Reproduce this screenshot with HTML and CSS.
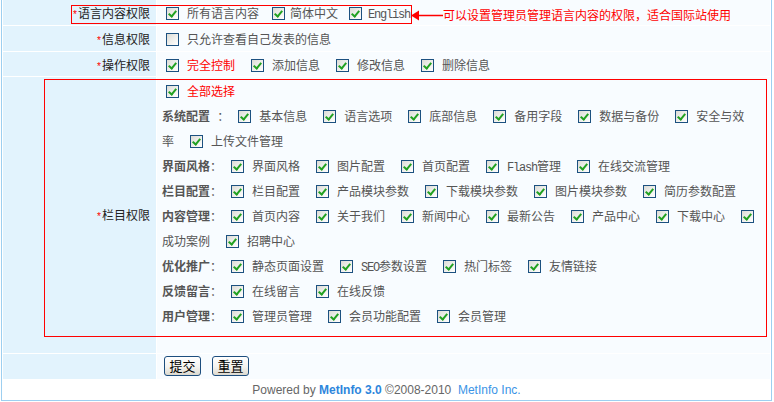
FILE: index.html
```html
<!DOCTYPE html>
<html lang="zh-CN">
<head>
<meta charset="utf-8">
<title>管理员权限设置</title>
<link rel="stylesheet" href="styles.css">
</head>
<body>
<div class="wrap">
  <div class="form">
    <div class="lab"><span class="req">*</span>语言内容权限</div>
    <div class="val lang"><span class="cb on first"></span><span class="t">所有语言内容</span><span class="cb on"></span><span class="t">简体中文</span><span class="cb on"></span><span class="t en">English</span></div>

    <div class="lab"><span class="req">*</span>信息权限</div>
    <div class="val row2"><span class="cb first"></span> <span class="t">只允许查看自己发表的信息</span></div>

    <div class="lab"><span class="req">*</span>操作权限</div>
    <div class="val">
      <span class="cb on first"></span> <span class="t red">完全控制</span>
      <span class="cb on"></span> <span class="t">添加信息</span>
      <span class="cb on"></span> <span class="t">修改信息</span>
      <span class="cb on"></span> <span class="t">删除信息</span>
    </div>

    <div class="lab mid"><span class="req">*</span>栏目权限</div>
    <div class="val big">
      <div class="ln"><span class="cb on first"></span> <span class="t red">全部选择</span></div>
      <div class="ln">
        <b class="k">系统配置</b> <span class="colon">：</span>
        <span class="cb on lead"></span> <span class="t">基本信息</span>
        <span class="cb on"></span> <span class="t">语言选项</span>
        <span class="cb on"></span> <span class="t">底部信息</span>
        <span class="cb on"></span> <span class="t">备用字段</span>
        <span class="cb on"></span> <span class="t">数据与备份</span>
        <span class="cb on"></span> <span class="t">安全与效率</span>
        <span class="cb on"></span> <span class="t">上传文件管理</span>
      </div>
      <div class="ln">
        <b class="k">界面风格</b><span class="colon">：</span>
        <span class="cb on lead"></span> <span class="t">界面风格</span>
        <span class="cb on"></span> <span class="t">图片配置</span>
        <span class="cb on"></span> <span class="t">首页配置</span>
        <span class="cb on"></span> <span class="t"><span class="en">Flash</span>管理</span>
        <span class="cb on"></span> <span class="t">在线交流管理</span>
      </div>
      <div class="ln">
        <b class="k">栏目配置</b><span class="colon">：</span>
        <span class="cb on lead"></span> <span class="t">栏目配置</span>
        <span class="cb on"></span> <span class="t">产品模块参数</span>
        <span class="cb on"></span> <span class="t">下载模块参数</span>
        <span class="cb on"></span> <span class="t">图片模块参数</span>
        <span class="cb on"></span> <span class="t">简历参数配置</span>
      </div>
      <div class="ln">
        <b class="k">内容管理</b><span class="colon">：</span>
        <span class="cb on lead"></span> <span class="t">首页内容</span>
        <span class="cb on"></span> <span class="t">关于我们</span>
        <span class="cb on"></span> <span class="t">新闻中心</span>
        <span class="cb on"></span> <span class="t">最新公告</span>
        <span class="cb on"></span> <span class="t">产品中心</span>
        <span class="cb on"></span> <span class="t">下载中心</span>
        <span class="cb on"></span> <span class="t">成功案例</span>
        <span class="cb on"></span> <span class="t">招聘中心</span>
      </div>
      <div class="ln">
        <b class="k">优化推广</b><span class="colon">：</span>
        <span class="cb on lead"></span> <span class="t">静态页面设置</span>
        <span class="cb on"></span> <span class="t"><span class="en">SEO</span>参数设置</span>
        <span class="cb on"></span> <span class="t">热门标签</span>
        <span class="cb on"></span> <span class="t">友情链接</span>
      </div>
      <div class="ln">
        <b class="k">反馈留言</b><span class="colon">：</span>
        <span class="cb on lead"></span> <span class="t">在线留言</span>
        <span class="cb on"></span> <span class="t">在线反馈</span>
      </div>
      <div class="ln">
        <b class="k">用户管理</b><span class="colon">：</span>
        <span class="cb on lead"></span> <span class="t">管理员管理</span>
        <span class="cb on"></span> <span class="t">会员功能配置</span>
        <span class="cb on"></span> <span class="t">会员管理</span>
      </div>
    </div>

    <div class="lab"></div>
    <div class="val btns">
      <button class="btn" type="submit">提交</button>
      <button class="btn" type="reset">重置</button>
    </div>
  </div>
  <div class="foot">Powered by <b>MetInfo 3.0</b> ©2008-2010&nbsp; <a href="#">MetInfo Inc.</a></div>
</div>

<div class="mark mark1"></div>
<div class="mark mark2"></div>
<div class="tip">
  <svg class="arrow" width="32" height="14" viewBox="0 0 32 14"><polygon points="0,7.5 8,2.5 8,12.5" fill="#f00"/><line x1="7" y1="7.5" x2="32" y2="7.5" stroke="#f00" stroke-width="1.5"/></svg>
  <span class="tip-text">可以设置管理员管理语言内容的权限，适合国际站使用</span>
</div>
</body>
</html>
```
FILE: styles.css
```css
* { box-sizing: border-box; }
html, body { margin: 0; padding: 0; background: #fff; }
body {
  width: 774px; height: 402px; overflow: hidden; position: relative;
  font-family: "Liberation Mono", "Noto Sans CJK SC", monospace;
  font-size: 12px; line-height: 25px; color: #333;
}
.wrap {
  margin-left: 1px; width: 771px;
  border: 1px solid #9dcff0; border-top: 0;
  padding: 0 1px; background: #fff;
}
.form {
  display: grid;
  grid-template-columns: 153px 613px;
  grid-template-rows: 25px 25px 24px 276px 25px;
  gap: 1px;
}
.lab {
  background: #e2f3fd; text-align: right; padding: 3px 6px 0 0;
  color: #222; white-space: nowrap;
}
.lab.mid { display: flex; align-items: center; justify-content: flex-end; padding-top: 5px; }
.val { background: #f8fcff; padding: 3px 15px 0 5px; color: #555; }
.val.big { padding-top: 4px; }
.req { color: #f00; font-size: 10px; line-height: 1; }
.t, .k, .colon { line-height: 1; }
.en { font-size: 12px; letter-spacing: -1.2px; line-height: 1; }
.red { color: #f00; }
.k { font-weight: bold; color: #555; }

.cb {
  display: inline-block; width: 13px; height: 13px;
  border: 1px solid #1c5180;
  background: linear-gradient(135deg, #dcdcd6 0%, #f2f2ef 60%, #fff 100%);
  vertical-align: -2px; margin-right: 0.8px; position: relative;
}
.cb.on::after {
  content: ""; position: absolute; left: 3px; top: 1px;
  width: 3px; height: 6px;
  border: solid #21a121; border-width: 0 2px 2px 0;
  transform: rotate(40deg);
}
.cb.first { margin-left: 4px; }
.cb.lead { margin-left: 1.8px; }
.t { margin-right: 8.8px; }

.lang .cb.first { margin-right: 8px; }
.lang .t { margin-right: 13px; }
.lang .cb:nth-child(3) { margin-right: 5px; }
.lang .t:nth-child(4) { margin-right: 11px; }
.lang .cb:nth-child(5) { margin-right: 6px; }

.btns { display: flex; align-items: flex-start; padding: 2px 0 0 7px; }
.btn {
  width: 37px; height: 20px; margin: 0 11px 0 0; padding: 0;
  border: 1px solid #1d4e7e; border-radius: 3px;
  background: linear-gradient(#ffffff, #f4f3ef 55%, #dcd9cf);
  font: 13px/18px "Noto Sans CJK SC", sans-serif; color: #000;
}

.foot {
  height: 21px; line-height: 23px; text-align: center;
  font-family: "Liberation Sans", Arial, sans-serif; font-size: 12px; color: #666;
}
.foot b { color: #2e86dc; }
.foot a { color: #3b94e6; text-decoration: none; }

.mark { position: absolute; border: 1px solid #f00; pointer-events: none; }
.mark1 { left: 71px; top: 5px; width: 341px; height: 19px; }
.mark2 { left: 44px; top: 79px; width: 723px; height: 258px; }
.tip {
  position: absolute; left: 411px; top: 8px; height: 14px;
  display: flex; align-items: center; color: #f00;
  font-family: "Noto Sans CJK SC", sans-serif; font-size: 12px; line-height: 14px;
  white-space: nowrap;
}
.arrow { display: block; }
```
